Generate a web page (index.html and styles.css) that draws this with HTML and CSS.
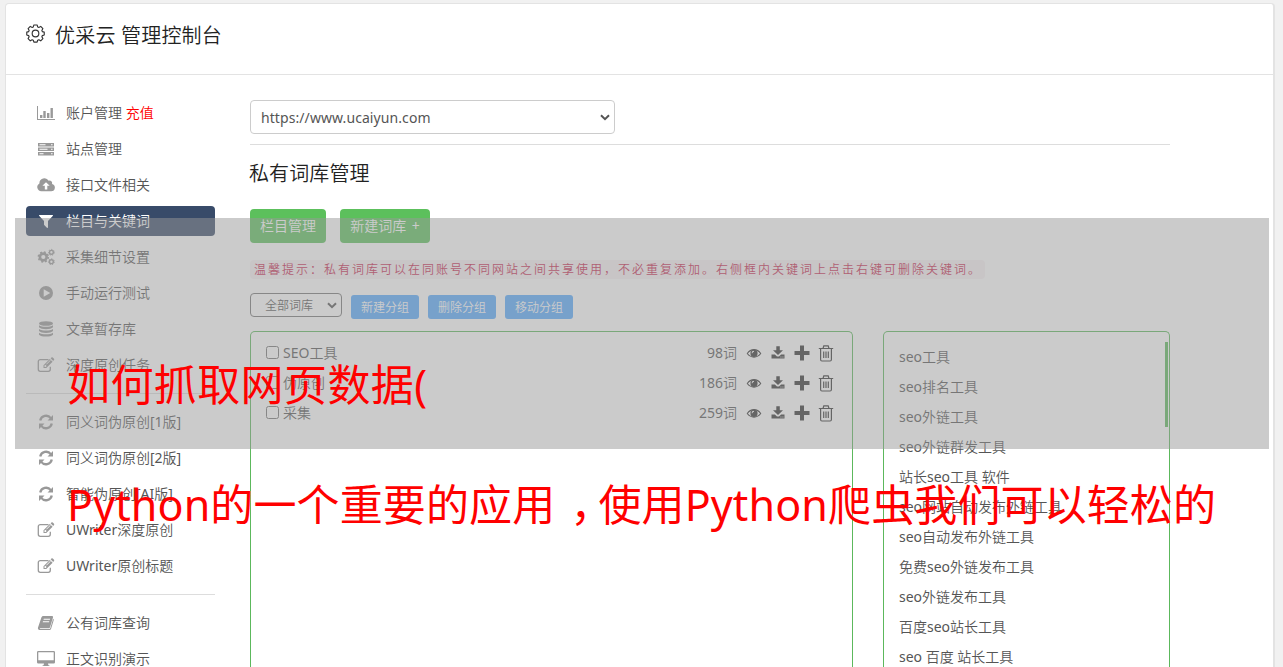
FILE: index.html
```html
<!DOCTYPE html>
<html lang="zh-CN">
<head>
<meta charset="utf-8">
<title>优采云 管理控制台</title>
<link rel="stylesheet" href="styles.css">
</head>
<body>
<svg class="defs" xmlns="http://www.w3.org/2000/svg">
  <symbol id="gear" viewBox="0 0 20 20"><g fill="none" stroke="currentColor" stroke-width="1.200"><path d="M8.300 1h3.400l.6 2.100 1.200.5 2-1.100 2.300 2.300-1.100 2 .5 1.200 2 .6v2.900l-2 .7-.5 1.200 1.100 2-2.300 2.300-2-1.100-1.200.5-.6 2H8.300l-.6-2-1.200-.5-2 1.100-2.300-2.300 1.100-2-.5-1.200-2-.7V8.600l2-.6.5-1.200-1.100-2 2.300-2.300 2 1.100 1.200-.5z" stroke-linejoin="round"/><circle cx="10" cy="10" r="3.500"/></g></symbol>
  <symbol id="chart" viewBox="0 0 18 18"><path d="M0 2h1v13h17v1H0zM3 11h2.400v3H3zM6.300 7h2.400v7H6.300zM10 9h2.400v5H10zM13.500 4h2.400v10h-2.400z"/></symbol>
  <symbol id="server" viewBox="0 0 18 18"><path fill-rule="evenodd" d="M1 3h16v3.500H1zM2.500 4.200v1.100h6V4.200zM14 4.200v1.100h1.600V4.200zM1 7.500h16V11H1zM2.500 8.700v1.100h8V8.700zM14 8.700v1.100h1.600V8.700zM1 12h16v3.500H1zM2.500 13.200v1.100h4v-1.100zM14 13.200v1.100h1.600v-1.100z"/></symbol>
  <symbol id="cloud" viewBox="0 0 18 18"><path fill-rule="evenodd" d="M4.300 15.200A4.100 4.100 0 0 1 2.400 7.500 5 5 0 0 1 11.700 4.800a2.500 2.500 0 0 1 3.300 3.100 3.700 3.700 0 0 1-.8 7.300zM9 6.200 5.400 9.800h2.400v3.700h2.500V9.800h2.400z"/></symbol>
  <symbol id="filter" viewBox="0 0 18 18"><path d="M2.800 3h12.400c.8 0 1 .6.500 1.100L11 9v6.200c0 .6-.6.900-1.100.5l-2.200-2.200C7.300 13.100 7 13 7 12.500V9L2.300 4.100C1.800 3.600 2 3 2.800 3z"/></symbol>
  <symbol id="gears" viewBox="0 0 18 18"><g fill="none" stroke="currentColor"><circle cx="6.300" cy="9" r="3.400" stroke-width="2.600"/><circle cx="6.300" cy="9" r="5" stroke-width="1.500" stroke-dasharray="1.960 1.960"/><circle cx="14.400" cy="4.300" r="1.900" stroke-width="1.400"/><circle cx="14.400" cy="4.300" r="2.900" stroke-width="1" stroke-dasharray="1.300 1.300"/><circle cx="14.400" cy="13.700" r="1.900" stroke-width="1.400"/><circle cx="14.400" cy="13.700" r="2.900" stroke-width="1" stroke-dasharray="1.300 1.300"/></g></symbol>
  <symbol id="play" viewBox="0 0 18 18"><path fill-rule="evenodd" d="M9 2a7 7 0 1 1 0 14A7 7 0 0 1 9 2zM6.700 5.200v7.600L13.200 9z"/></symbol>
  <symbol id="database" viewBox="0 0 18 18"><ellipse cx="9" cy="3.500" rx="7" ry="2.300"/><path d="M2 5.300c3 2 11 2 14 0v2c-2 2.500-12 2.500-14 0zM2 9c3 2 11 2 14 0v2c-2 2.500-12 2.500-14 0zM2 12.700c3 2 11 2 14 0v2c-2 2.500-12 2.500-14 0z"/></symbol>
  <symbol id="edit" viewBox="0 0 18 18"><path fill="none" stroke="currentColor" stroke-width="1.300" d="M11.500 3.600H3.300a2 2 0 0 0-2 2v7.700a2 2 0 0 0 2 2h8a2 2 0 0 0 2-2v-2.500"/><path fill-rule="evenodd" d="m6.500 9.300 6.300-6.300 2.800 2.800-6.300 6.300H6.500zm1 .3v1.300h1.300l.8-.8-1.300-1.300zM9.200 8l4-4 .4.400-4 4zM13.600 2.300l.8-.8q.7-.6 1.400 0l1.200 1.200q.6.700 0 1.400l-.8.800z"/></symbol>
  <symbol id="refresh" viewBox="0 0 18 18"><g fill="none" stroke="currentColor" stroke-width="2.300"><path d="M3.200 7.500A6 6 0 0 1 13.800 5.100M14.800 10.500A6 6 0 0 1 4.200 12.900"/></g><path d="M16 2v5.500h-5.500zM2 16v-5.500h5.500z"/></symbol>
  <symbol id="book" viewBox="0 0 18 18"><path fill-rule="evenodd" d="M6.500 2h8.300c1 0 1.500.7 1.200 1.600l-3 9.600c-.2.700-.8 1-1.500 1H3.300c-.6 0-.8.600 0 .8h9c.5 0 .8-.3 1-.7l2.800-9.500c.6.300.8.800.6 1.400l-2.600 8.600c-.3.900-.9 1.300-1.800 1.300H3c-1.500 0-2.500-1.500-2-2.700L4.300 3.700C4.700 2.500 5.300 2 6.500 2zm.3 2.800-.3 1h6.300l.3-1zM6 7.300l-.3 1H12l.3-1z"/></symbol>
  <symbol id="desktop" viewBox="0 0 18 18"><path fill-rule="evenodd" d="M1.300 1h15.400q1.300 0 1.300 1.300v9.900q0 1.300-1.300 1.300H11l.4 1.700h1v.8H5.600v-.8h1L7 13.500H1.300Q0 13.500 0 12.200V2.300Q0 1 1.300 1zM1.300 2.300v7.900h15.400V2.300z"/></symbol>
  <symbol id="eye" viewBox="0 0 18 18"><path fill="none" stroke="currentColor" stroke-width="1.100" d="M2.300 9.500C5.800 4.300 12.200 4.300 15.700 9.500 12.200 14.300 5.800 14.300 2.300 9.500z"/><path fill-rule="evenodd" d="M9 5.700a3.600 3.600 0 1 1 0 7.200 3.600 3.600 0 0 1 0-7.200zm0 1.100a2.400 2.400 0 0 0-2.400 2.400h.9A1.500 1.500 0 0 1 9 7.700z"/></symbol>
  <symbol id="download" viewBox="0 0 18 18"><path fill-rule="evenodd" d="M7.300 2.300h3.500v4H14L9 11 4 6.300h3.300zM2.500 10.500h3.400L8 12.600h2l2.100-2.100h3.400v3.900h-13zm9 2v.9h.9v-.9zm2 0v.9h.9v-.9z"/></symbol>
  <symbol id="plus" viewBox="0 0 18 18"><path d="M7 1.500h4V7h5.500v4H11v5.500H7V11H1.500V7H7z"/></symbol>
  <symbol id="trash" viewBox="0 0 18 18"><path fill="none" stroke="currentColor" stroke-width="1.200" d="M1.800 4.500h14.400M3.600 4.500v11q0 1.500 1.300 1.500h8.200q1.300 0 1.300-1.500v-11M6 4.500l.8-2.700h4.400l.8 2.700M6.700 7.500v6.500M9 7.500v6.500M11.300 7.500v6.500"/></symbol>
</svg>
<div class="card">
  <header class="top"><svg class="gear"><use href="#gear"/></svg><h1>优采云 管理控制台</h1></header>
  <div class="layout">
    <nav class="side">
      <a class="item"><svg><use href="#chart"/></svg><span>账户管理 <b class="pay">充值</b></span></a>
      <a class="item"><svg><use href="#server"/></svg><span>站点管理</span></a>
      <a class="item"><svg><use href="#cloud"/></svg><span>接口文件相关</span></a>
      <a class="item active"><svg><use href="#filter"/></svg><span>栏目与关键词</span></a>
      <a class="item"><svg><use href="#gears"/></svg><span>采集细节设置</span></a>
      <a class="item"><svg><use href="#play"/></svg><span>手动运行测试</span></a>
      <a class="item"><svg><use href="#database"/></svg><span>文章暂存库</span></a>
      <a class="item"><svg><use href="#edit"/></svg><span>深度原创任务</span></a>
      <hr>
      <a class="item"><svg><use href="#refresh"/></svg><span>同义词伪原创[1版]</span></a>
      <a class="item"><svg><use href="#refresh"/></svg><span>同义词伪原创[2版]</span></a>
      <a class="item"><svg><use href="#refresh"/></svg><span>智能伪原创[AI版]</span></a>
      <a class="item"><svg><use href="#edit"/></svg><span>UWriter深度原创</span></a>
      <a class="item"><svg><use href="#edit"/></svg><span>UWriter原创标题</span></a>
      <hr>
      <a class="item"><svg><use href="#book"/></svg><span>公有词库查询</span></a>
      <a class="item"><svg><use href="#desktop"/></svg><span>正文识别演示</span></a>
    </nav>
    <main class="main">
      <div class="select site"><span>https://www.ucaiyun.com</span><svg class="caret" viewBox="0 0 10 7"><path d="M1 1.200 5 5.200 9 1.200"/></svg></div>
      <div class="rule"></div>
      <h2>私有词库管理</h2>
      <div class="actions"><a class="btn">栏目管理</a><a class="btn wide">新建词库 +</a></div>
      <div class="tip">温馨提示：私有词库可以在同账号不同网站之间共享使用，不必重复添加。右侧框内关键词上点击右键可删除关键词。</div>
      <div class="groups">
        <div class="select group"><span>全部词库</span><svg class="caret" viewBox="0 0 10 7"><path d="M1 1.200 5 5.200 9 1.200"/></svg></div>
        <a class="small">新建分组</a><a class="small">删除分组</a><a class="small">移动分组</a>
      </div>
      <div class="panels">
        <section class="panel words">
          <div class="row"><i class="check"></i><span>SEO工具</span><em>98词</em><svg><use href="#eye"/></svg><svg><use href="#download"/></svg><svg><use href="#plus"/></svg><svg><use href="#trash"/></svg></div>
          <div class="row"><i class="check"></i><span>伪原创</span><em>186词</em><svg><use href="#eye"/></svg><svg><use href="#download"/></svg><svg><use href="#plus"/></svg><svg><use href="#trash"/></svg></div>
          <div class="row"><i class="check"></i><span>采集</span><em>259词</em><svg><use href="#eye"/></svg><svg><use href="#download"/></svg><svg><use href="#plus"/></svg><svg><use href="#trash"/></svg></div>
        </section>
        <section class="panel keys">
          <ul><li>seo工具</li><li>seo排名工具</li><li>seo外链工具</li><li>seo外链群发工具</li><li>站长seo工具 软件</li><li>seo网站自动发布外链工具</li><li>seo自动发布外链工具</li><li>免费seo外链发布工具</li><li>seo外链发布工具</li><li>百度seo站长工具</li><li>seo 百度 站长工具</li></ul>
          <div class="thumb"></div>
        </section>
      </div>
    </main>
  </div>
</div>
<div class="veil"></div>
<div class="caption first">如何抓取网页数据(</div>
<div class="caption second">Python的一个重要的应用<span class="comma">，</span>使用Python爬虫我们可以轻松的</div>
</body>
</html>
```
FILE: styles.css
```css
* { box-sizing: border-box; }
html { overflow: hidden; }
body {
  margin: 0;
  height: 667px;
  overflow: hidden;
  position: relative;
  padding: 3px 8px 0 5px;
  background: #f1f1f1;
  color: #555;
  font: 400 14px/20px "Noto Sans", "Noto Sans CJK SC DemiLight", "Noto Sans CJK SC Light", "Noto Sans CJK SC", sans-serif;
}
.defs { position: absolute; width: 0; height: 0; }
.card {
  height: 664px;
  overflow: hidden;
  background: #fff;
  border: 1px solid #e3e3e3;
  border-right-width: 2px;
  border-bottom: 0;
  border-radius: 4px 4px 0 0;
}
.top {
  height: 71px;
  border-bottom: 1px solid #e3e3e3;
  display: flex;
  align-items: flex-start;
  padding: 17px 0 0 20px;
  color: #333;
}
.gear { width: 19px; height: 19px; margin: 3px 10px 0 0; }
h1, h2 { margin: 0; font-size: 20px; line-height: 30px; font-weight: 300; color: #222; white-space: nowrap; }
h1 { letter-spacing: .2px; }
.layout { display: flex; height: 592px; padding: 23px 0 0 20px; }
.side { width: 189px; display: flex; flex-direction: column; gap: 6px; flex: none; }
.item { height: 30px; display: flex; align-items: center; padding-left: 11px; border-radius: 4px; white-space: nowrap; flex: none; }
.item svg { width: 18px; height: 18px; margin-right: 11px; color: #999; fill: currentColor; flex: none; }
.item.active { background: #384b69; color: #fff; }
.item.active svg { color: #fff; }
.pay { color: #f00; font-weight: 400; }
.side hr { width: 100%; height: 1px; border: 0; background: #ddd; margin: 7px 0; flex: none; }
.main { width: 920px; margin-left: 35px; padding-top: 2px; flex: none; display: flex; flex-direction: column; }
.select { display: flex; align-items: center; justify-content: space-between; border: 1px solid #ccc; border-radius: 4px; background: #fff; flex: none; }
.caret { width: 10px; height: 7px; fill: none; stroke: #555; stroke-width: 2; }
.site { width: 365px; height: 34px; padding: 0 4px 0 10px; }
.site span { padding-top: 1px; letter-spacing: .08px; }
.rule { height: 1px; background: #ddd; margin-top: 10px; flex: none; }
h2 { margin: 14px 0 0 -1px; letter-spacing: .1px; }
.actions { display: flex; gap: 14px; margin-top: 20px; }
.btn { height: 34px; width: 76px; border-radius: 4px; background: #5cc05c; color: #fff; line-height: 34px; text-align: center; white-space: nowrap; }
.btn.wide { width: 90px; word-spacing: 2px; }
.tip {
  width: 735px; height: 19px; margin-top: 17px; padding-left: 4px;
  border-radius: 4px; background: #f9f2f4; color: #c7254e;
  font-size: 12px; letter-spacing: 2px; line-height: 19px; white-space: nowrap;
}
.groups { display: flex; margin-top: 14px; }
.group { width: 92px; height: 24px; padding: 0 4px 0 14px; margin-right: 9px; border-color: #767676; font-size: 12px; }
.group span { padding-top: 1px; }
.small { width: 68px; height: 24px; margin: 2px 9px 0 0; border-radius: 3px; background: #56aaff; color: #fff; font-size: 12px; line-height: 25px; text-align: center; }
.panels { display: flex; gap: 30px; margin-top: 12px; flex: 1; min-height: 0; }
.panel { border: 1px solid #5cb85c; border-bottom: 0; border-radius: 5px 5px 0 0; overflow: hidden; }
.words { width: 603px; padding: 6px 17px 0 15px; }
.row { height: 30px; display: flex; align-items: center; }
.check { width: 13px; height: 13px; border: 1px solid #767676; border-radius: 2.5px; margin: -2px 4px 0 0; }
.row em { font-style: normal; margin-left: auto; margin-right: 8px; }
.row svg { width: 18px; height: 18px; margin-right: 6px; color: #333; fill: currentColor; }
.row svg:last-child { margin-right: 0; }
.keys { width: 287px; display: flex; justify-content: space-between; padding: 10px 1px 0 15px; }
ul { list-style: none; margin: 0; padding: 0; }
li { height: 30px; line-height: 30px; white-space: nowrap; }
.thumb { width: 3px; height: 85px; background: #5cb85c; }
.veil { position: absolute; left: 15px; top: 218px; width: 1254px; height: 231px; background: rgba(151, 151, 151, .5); }
.caption { position: absolute; left: 67px; color: #f00; font-family: "Noto Sans", "Noto Sans CJK SC", sans-serif; font-size: 43px; letter-spacing: .12px; line-height: 60px; white-space: nowrap; }
.comma { margin: 0 -15px 0 15px; }
.first { top: 355px; letter-spacing: .4px; }
.second { top: 475px; }
```
